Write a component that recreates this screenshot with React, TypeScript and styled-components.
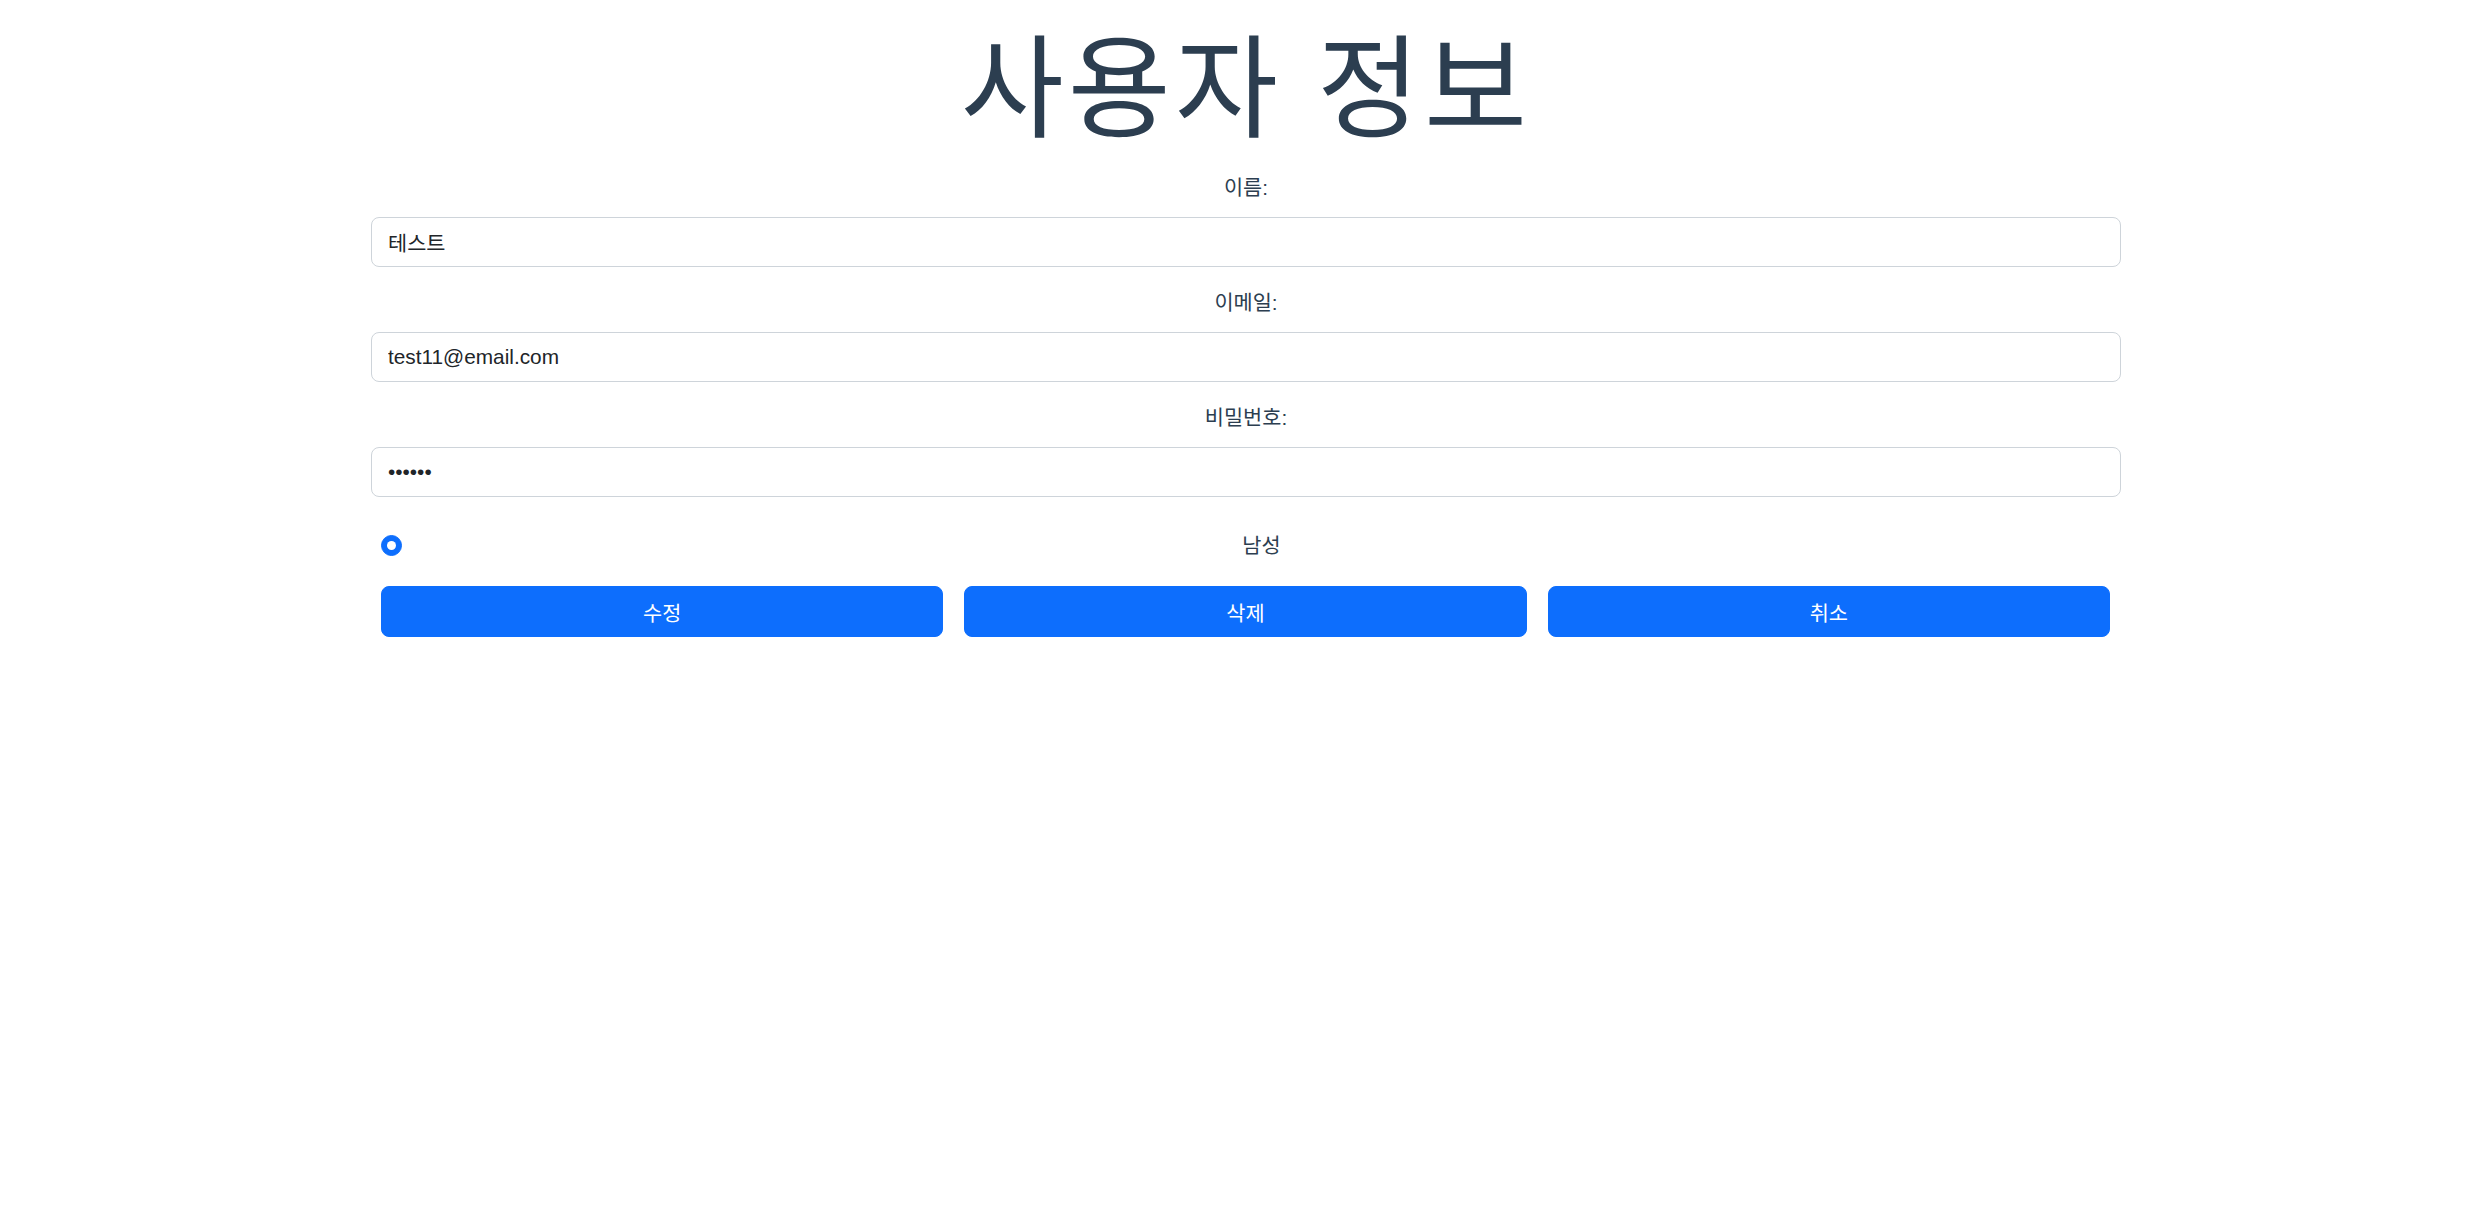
import React from 'react';
import styled, { createGlobalStyle } from 'styled-components';

/* style */
const textColor = '#2c3e50';
const primary = '#0d6efd';
const fontStack = `"Liberation Sans", Arial, "Noto Sans CJK KR", sans-serif`;

const GlobalStyle = createGlobalStyle`
  html, body {
    margin: 0;
    padding: 0;
    background: #ffffff;
  }

  body {
    font-family: ${fontStack};
    color: ${textColor};
    -webkit-font-smoothing: antialiased;
  }

  * {
    box-sizing: border-box;
  }
`;

const Page = styled.div`
  width: 1750px;
  margin: 0 auto;
  text-align: center;
`;

const Title = styled.h1`
  margin: 0 0 13px;
  padding-top: 22px;
  font-size: 112px;
  font-weight: 400;
  line-height: 137px;
  letter-spacing: 4px;
  color: ${textColor};
`;

const Form = styled.form`
  display: flex;
  flex-direction: column;
`;

const FieldGroup = styled.div`
  display: flex;
  flex-direction: column;
  margin-bottom: 20px;
`;

const Label = styled.label`
  display: block;
  margin-bottom: 14px;
  font-size: 20.8px;
  line-height: 31px;
  color: ${textColor};
`;

const Input = styled.input`
  display: block;
  width: 100%;
  height: 50px;
  padding: 0 16px;
  font-family: inherit;
  font-size: 20.8px;
  color: #212529;
  background: #ffffff;
  border: 1px solid #ced4da;
  border-radius: 8px;
  outline: none;
`;

const GenderRow = styled.div`
  display: flex;
  align-items: center;
  padding: 0 10px;
  margin-top: 13px;
  height: 31px;
`;

const Radio = styled.span<{ checked?: boolean }>`
  flex: none;
  width: 21px;
  height: 21px;
  border-radius: 50%;
  border: 1px solid ${p => (p.checked ? primary : '#adb5bd')};
  background: ${p => (p.checked ? primary : '#ffffff')};
  display: flex;
  align-items: center;
  justify-content: center;

  &::after {
    content: '';
    width: 9px;
    height: 9px;
    border-radius: 50%;
    background: #ffffff;
    display: ${p => (p.checked ? 'block' : 'none')};
  }
`;

const GenderLabel = styled.span`
  flex: 1;
  margin-left: 10px;
  font-size: 20.8px;
  line-height: 31px;
  color: ${textColor};
  text-align: center;
`;

const ButtonRow = styled.div`
  display: grid;
  grid-template-columns: repeat(3, 1fr);
  column-gap: 21px;
  padding: 0 11px 0 10px;
  margin-top: 25px;
`;

const Button = styled.button`
  height: 51px;
  font-family: inherit;
  font-size: 20.8px;
  color: #ffffff;
  background: ${primary};
  border: 1px solid ${primary};
  border-radius: 8px;
  cursor: pointer;
`;

const fields = [
  { label: '이름:', type: 'text', value: '테스트' },
  { label: '이메일:', type: 'email', value: 'test11@email.com' },
  { label: '비밀번호:', type: 'password', value: '123456' },
];

export default function App() {
  return (
    <>
      <GlobalStyle />
      <Page>
        <Title>사용자 정보</Title>
        <Form onSubmit={e => e.preventDefault()}>
          {fields.map(f => (
            <FieldGroup key={f.label}>
              <Label>{f.label}</Label>
              <Input type={f.type} defaultValue={f.value} />
            </FieldGroup>
          ))}
          <GenderRow>
            <Radio checked />
            <GenderLabel>남성</GenderLabel>
          </GenderRow>
          <ButtonRow>
            <Button type="button">수정</Button>
            <Button type="button">삭제</Button>
            <Button type="button">취소</Button>
          </ButtonRow>
        </Form>
      </Page>
    </>
  );
}
